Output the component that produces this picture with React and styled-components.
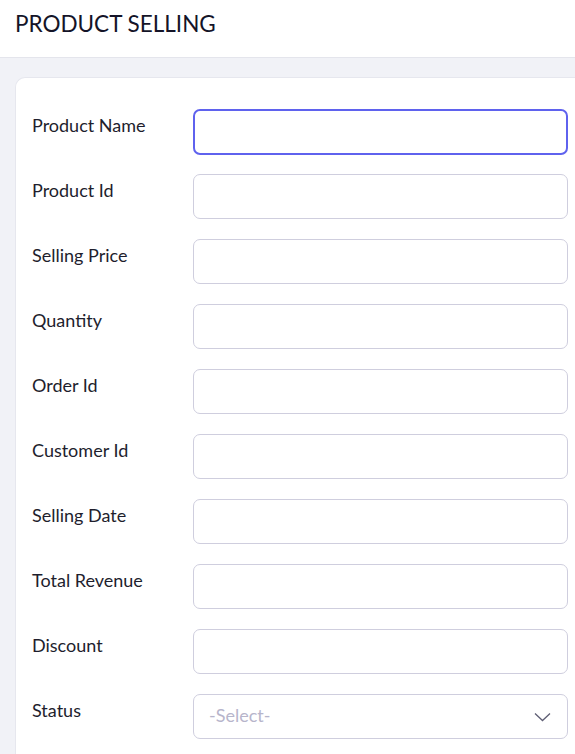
import React from 'react';
import styled, { createGlobalStyle } from 'styled-components';

const Global = createGlobalStyle`
  html, body { margin: 0; padding: 0; }
  body {
    font-family: Lato, "Open Sans", sans-serif;
    background: #f1f2f7;
    color: #1e1e2d;
    overflow: hidden;
  }
`;

const fields = [
  'Product Name',
  'Product Id',
  'Selling Price',
  'Quantity',
  'Order Id',
  'Customer Id',
  'Selling Date',
  'Total Revenue',
  'Discount',
];

const App = () => {
  return (
    <>
      <Global />
      <Header>
        <Title>PRODUCT SELLING</Title>
      </Header>
      <Main>
        <Card>
          {fields.map((f, i) => (
            <Row key={f}>
              <Label>{f}</Label>
              <Input focused={i === 0} />
            </Row>
          ))}
          <Row>
            <Label>Status</Label>
            <Select>
              <Placeholder>-Select-</Placeholder>
              <svg width="17" height="10" viewBox="0 0 17 10">
                <path d="M1 1.5 L8.5 8.5 L16 1.5" fill="none" stroke="#5e5e74" strokeWidth="1.3" />
              </svg>
            </Select>
          </Row>
        </Card>
      </Main>
    </>
  );
};

const Header = styled.div`
  height: 58px;
  background: #fff;
  border-bottom: 1px solid #e4e5ec;
  display: flex;
  align-items: flex-start;
  padding: 10px 0 0 15px;
  box-sizing: border-box;
`;

const Title = styled.h1`
  margin: 0;
  font-size: 22.5px;
  line-height: 28px;
  font-weight: 400;
  color: #141428;
`;

const Main = styled.div`
  padding: 19px 0 0 15px;
  min-height: 700px;
`;

const Card = styled.div`
  background: #fff;
  border: 1px solid #e6e7ee;
  border-right: none;
  border-radius: 10px 0 0 0;
  padding: 31px 7px 40px 16px;
  display: flex;
  flex-direction: column;
  gap: 20px;
  min-height: 700px;
`;

const Row = styled.div`
  display: grid;
  grid-template-columns: 161px 375px;
  align-items: start;
`;

const Label = styled.label`
  font-size: 18px;
  line-height: 22px;
  padding-top: 4.5px;
  color: #1e1e2d;
`;

const Input = styled.div`
  height: ${p => (p.focused ? '46px' : '45px')};
  margin-bottom: ${p => (p.focused ? '-1px' : '0')};
  box-sizing: border-box;
  border: ${p => (p.focused ? '2px solid #5f62ee' : '1px solid #cfcede')};
  border-radius: 7px;
  background: #fff;
`;

const Select = styled.div`
  height: 45px;
  box-sizing: border-box;
  border: 1px solid #cfcede;
  border-radius: 7px;
  display: flex;
  align-items: center;
  justify-content: space-between;
  padding: 0 16px 0 15px;
`;

const Placeholder = styled.span`
  font-size: 18px;
  line-height: 22px;
  margin-top: -3px;
  color: #b7b5cb;
`;

export default App;
